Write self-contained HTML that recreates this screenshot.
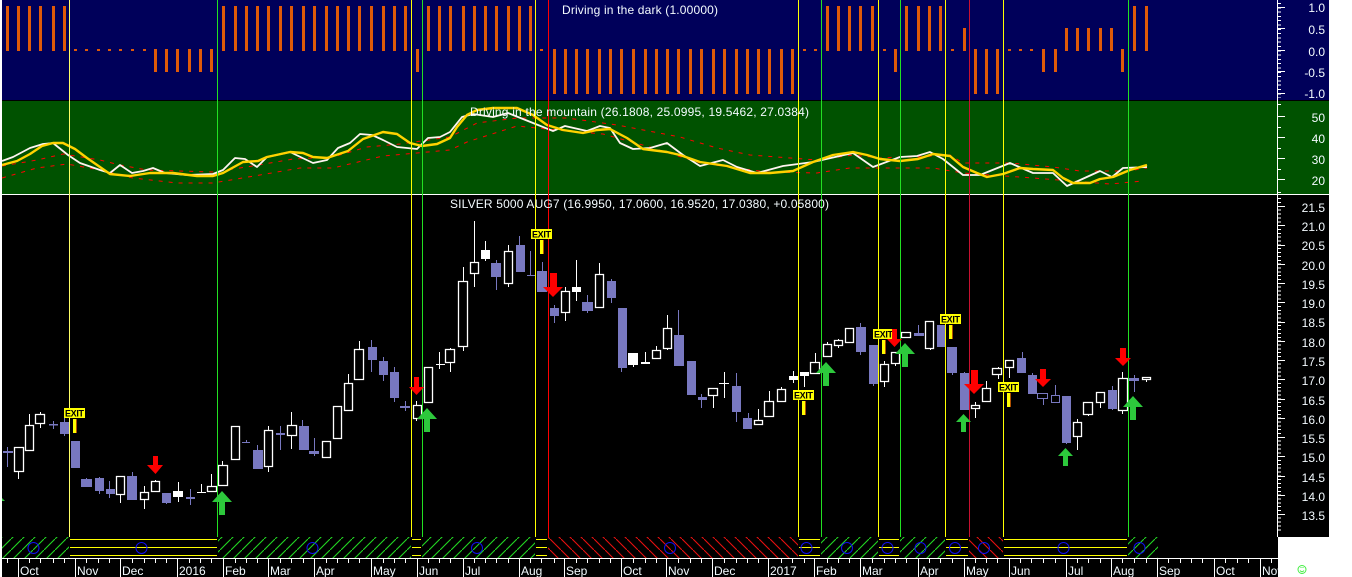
<!DOCTYPE html>
<html><head><meta charset="utf-8"><title>Silver chart</title>
<style>html,body{margin:0;padding:0;background:#fff;overflow:hidden}svg{display:block}text{font-family:"Liberation Sans",Arial,sans-serif}</style></head>
<body>
<svg width="1352" height="577" viewBox="0 0 1352 577" xmlns="http://www.w3.org/2000/svg">
<defs>
<pattern id="hg" patternUnits="userSpaceOnUse" width="11" height="11"><path d="M0 11L11 0" stroke="#22d822" stroke-width="1.100" fill="none"/></pattern>
<pattern id="hr" patternUnits="userSpaceOnUse" width="11" height="11"><path d="M0 0L11 11" stroke="#e81010" stroke-width="1.100" fill="none"/></pattern>
</defs>
<rect width="1352" height="577" fill="#fff"/>
<rect x="2" y="0" width="1327" height="100" fill="#00005a"/>
<rect x="2" y="100" width="1327" height="1" fill="#000"/>
<rect x="2" y="101" width="1327" height="93" fill="#005200"/>
<rect x="2" y="194" width="1327" height="1" fill="#fff"/>
<rect x="2" y="195" width="1327" height="342" fill="#000"/>
<rect x="2" y="537" width="1276" height="40" fill="#000"/>

<!-- dark indicator -->
<path fill="none" stroke="#e05a08" stroke-width="3" shape-rendering="crispEdges" d="M7.5 6V51M18.5 6V51M29.5 6V51M40.5 6V51M53.5 6V51M64.5 6V51M223.5 6V51M235.5 6V51M246.5 6V51M257.5 6V51M268.5 6V51M280.5 6V51M291.5 6V51M303.5 6V51M314.5 6V51M326.5 6V51M337.5 6V51M348.5 6V51M359.5 6V51M371.5 6V51M383.5 6V51M394.5 6V51M405.5 6V51M428.5 6V51M439.5 6V51M450.5 6V51M463.5 6V51M474.5 6V51M485.5 6V51M496.5 6V51M508.5 6V51M519.5 6V51M530.5 6V51M827.5 6V51M838.5 6V51M849.5 6V51M860.5 6V51M872.5 6V51M906.5 6V51M918.5 6V51M929.5 6V51M940.5 6V51M1134.5 6V51M1146.5 6V51
M155.5 49V72M166.5 49V72M177.5 49V72M189.5 49V72M200.5 49V72M211.5 49V72M417.5 49V72M895.5 49V72M1043.5 49V72M1055.5 49V72M1122.5 49V72
M964.5 28V51M1066.5 28V51M1077.5 28V51M1088.5 28V51M1100.5 28V51M1111.5 28V51
M554.5 49V94M565.5 49V94M576.5 49V94M587.5 49V94M599.5 49V94M610.5 49V94M621.5 49V94M633.5 49V94M645.5 49V94M656.5 49V94M667.5 49V94M678.5 49V94M690.5 49V94M701.5 49V94M713.5 49V94M724.5 49V94M736.5 49V94M747.5 49V94M758.5 49V94M769.5 49V94M781.5 49V94M792.5 49V94M975.5 49V94M986.5 49V94M997.5 49V94
M75.5 49V51M86.5 49V51M98.5 49V51M109.5 49V51M120.5 49V51M132.5 49V51M144.5 49V51M541.5 49V51M804.5 49V51M815.5 49V51M884.5 49V51M952.5 49V51M1009.5 49V51M1020.5 49V51M1031.5 49V51"/>

<!-- mountain indicator -->
<g fill="none" stroke-linejoin="round">
<path stroke="#ff0000" stroke-dasharray="4 6" d="M2 166L37 160L63 154L100 160L120 165L147 170L213 172L253 166L293 159L333 157L367 147L400 144L450 137L477 123L517 118L567 118L617 125L680 137L717 148L750 155L817 160L853 155L880 158L900 157L917 157L950 155L963 163L1010 163L1053 167L1080 171L1127 171L1147 168"/>
<path stroke="#ff0000" stroke-dasharray="4 6" d="M2 178L37 168L67 164L100 170L133 178L177 183L213 183L260 175L300 168L333 168L383 156L450 150L467 142L517 126L557 130L603 134L650 147L700 163L767 172L817 173L850 168L900 168L933 168L963 173L1033 178L1110 184L1143 181"/>
<path stroke="#fff4f0" stroke-width="1.800" d="M2 161L13 157L30 148L43 144L53 143L68 155L80 163L100 170L110 173L120 165L132 173L143 171L153 168L165 173L187 175L213 174L223 170L235 158L245 159L257 167L267 157L290 152L313 163L327 160L338 148L350 143L360 134L372 135L383 140L397 147L417 149L428 138L440 137L450 132L462 117L473 114L493 117L508 113L533 123L553 131L565 126L587 131L600 126L610 128L620 143L633 149L650 148L667 143L683 155L700 166L723 160L737 167L757 173L783 166L813 162L853 153L873 167L900 157L917 156L930 152L943 159L963 175L980 175L1010 163L1033 173L1053 173L1067 186L1100 171L1112 177L1123 168L1147 167"/>
<path stroke="#ffd200" stroke-width="2.400" d="M2 165L17 161L30 154L42 146L53 143L63 143L75 149L87 158L110 174L130 176L150 173L173 173L197 176L213 176L223 173L243 162L258 161L267 157L290 152L303 153L313 157L327 158L348 151L363 139L383 132L397 134L410 143L422 146L437 144L450 138L457 127L467 115L477 110L493 108L517 108L533 115L547 125L563 130L583 133L597 130L610 129L627 138L643 149L667 152L680 155L700 162L727 166L750 173L770 173L793 171L813 162L833 155L853 152L867 155L880 159L900 161L918 159L933 154L950 156L963 167L977 173L987 177L1003 174L1020 168L1033 169L1053 170L1063 178L1073 183L1090 183L1100 179L1113 177L1130 170L1147 165"/>
</g>

<!-- candles -->
<g shape-rendering="crispEdges">
<path fill="none" stroke="#fff" d="M18.5 471V479M29.5 414V425M40.5 412V428M120.5 494V503M144.5 486V509M155.5 480V482M201.5 484V492M197 492.5H206M211.5 474V487M222.5 461V466M268.5 426V472M291.5 412V449M348.5 374V384M359.5 341V350M416.5 401V421M439.5 352V369M436 364.5H445M450.5 348V372M463.5 267V351M474.5 221V287M508.5 245V287M565.5 287V321M599.5 263V275M656.5 346V351M667.5 315V350M713.5 395V408M724.5 372V398M719 383.5H729M758.5 409V421M769.5 391V402M781.5 387V390M815.5 353V363M827.5 342V345M838.5 339V348M849.5 328V343M884.5 361V387M895.5 352V366M930.5 321V350M975.5 402V418M986.5 381V389M998.5 367V379M1009.5 367V378M1077.5 419V450M1088.5 402V416M1100.5 402V408M1122.5 372V414M1146.5 377V382M178.5 482V502M485.5 241V261M576.5 260V301M633.5 365V367M645.5 352V363M793.5 371V383M804.5 376V387"/>
</g>
<path fill="#000" stroke="#fff" stroke-width="1.300" d="M14.5 447.5H23.5V471.5H14.5ZM25.5 425.5H33.5V450.5H25.5ZM35.5 414.5H44.5V423.5H35.5ZM116.5 476.5H124.5V494.5H116.5ZM140.5 492.5H148.5V499.5H140.5ZM151.5 481.5H159.5V491.5H151.5ZM207.5 486.5H216.5V491.5H207.5ZM218.5 465.5H227.5V485.5H218.5ZM231.5 426.5H239.5V459.5H231.5ZM264.5 430.5H272.5V466.5H264.5ZM287.5 425.5H296.5V435.5H287.5ZM322.5 441.5H330.5V457.5H322.5ZM333.5 406.5H341.5V438.5H333.5ZM344.5 383.5H352.5V410.5H344.5ZM354.5 349.5H363.5V379.5H354.5ZM413.5 405.5H421.5V418.5H413.5ZM424.5 367.5H432.5V402.5H424.5ZM445.5 349.5H454.5V362.5H445.5ZM458.5 281.5H467.5V346.5H458.5ZM470.5 262.5H478.5V273.5H470.5ZM504.5 251.5H512.5V283.5H504.5ZM561.5 291.5H569.5V312.5H561.5ZM595.5 274.5H603.5V307.5H595.5ZM652.5 350.5H660.5V358.5H652.5ZM663.5 328.5H671.5V348.5H663.5ZM708.5 388.5H717.5V395.5H708.5ZM754.5 420.5H762.5V424.5H754.5ZM764.5 401.5H773.5V416.5H764.5ZM777.5 389.5H785.5V401.5H777.5ZM810.5 362.5H819.5V373.5H810.5ZM823.5 344.5H831.5V356.5H823.5ZM834.5 340.5H842.5V345.5H834.5ZM845.5 328.5H853.5V342.5H845.5ZM880.5 364.5H888.5V381.5H880.5ZM891.5 352.5H899.5V363.5H891.5ZM901.5 332.5H910.5V337.5H901.5ZM925.5 321.5H933.5V348.5H925.5ZM971.5 405.5H979.5V408.5H971.5ZM982.5 388.5H990.5V401.5H982.5ZM992.5 368.5H1001.5V374.5H992.5ZM1005.5 360.5H1013.5V367.5H1005.5ZM1073.5 422.5H1081.5V436.5H1073.5ZM1083.5 402.5H1092.5V414.5H1083.5ZM1096.5 392.5H1104.5V402.5H1096.5ZM1118.5 378.5H1127.5V410.5H1118.5ZM1142.5 377.5H1150.5V379.5H1142.5Z"/>
<g shape-rendering="crispEdges">
<path fill="#fff" d="M173 491h10v6h-10zM481 250h9v9h-9zM572 287h9v5h-9zM628 353h10v12h-10zM641 362h9v2h-9zM789 376h9v4h-9zM800 372h9v4h-9z"/>
<path fill="none" stroke="#7878c0" d="M7.5 447V467M53.5 421V429M64.5 415V436M86.5 478V480M99.5 477V494M109.5 481V498M132.5 472V477M166.5 503V504M190.5 489V505M246.5 440V442M257.5 445V451M280.5 426V450M302.5 420V427M314.5 438V456M371.5 340V372M383.5 357V381M394.5 367V402M405.5 401V411M496.5 260V290M519.5 236V246M530.5 251V276M542.5 262V272M554.5 305V323M587.5 295V313M611.5 279V303M621.5 368V372M678.5 310V336M701.5 394V408M736.5 373V422M748.5 413V419M860.5 323V355M873.5 384V386M918.5 325V334M952.5 373V375M964.5 372V374M1022.5 352V359M1032.5 373V376M1043.5 398V405M1055.5 385V396M1066.5 443V444M1112.5 386V410M1134.5 375V392"/>
<path fill="#7878c0" d="M3 451h10v2H3zM49 424h9v1.500h-9zM60 422h9v12h-9zM71 441h9v27h-9zM81 479h11v8H81zM95 478h9v13h-9zM106 489h9v5h-9zM127 476h10v24h-10zM162 493h9v10h-9zM186 497h9v2h-9zM242 442h8v1h-8zM253 450h10v19h-10zM276 433h9v2h-9zM299 426h10v24h-10zM309 451h10v3h-10zM368 347h9v13h-9zM379 361h9v14h-9zM390 372h9v26h-9zM400 406h10v2h-10zM491 263h10v14h-10zM516 245h9v27h-9zM527 275h9v1h-9zM537 271h10v21h-10zM550 308h9v8h-9zM582 302h11v9h-11zM607 281h9v17h-9zM618 308h9v60h-9zM674 335h10v31h-10zM687 361h9v34h-9zM698 397h9v3h-9zM732 386h9v26h-9zM743 418h9v11h-9zM856 327h10v25h-10zM869 345h9v39h-9zM914 333h10v3h-10zM937 325h9v22h-9zM947 347h10v26h-10zM960 373h9v37h-9zM1017 358h9v15h-9zM1028 375h9v19h-9zM1062 396h9v47h-9zM1108 390h9v19h-9zM1128 378h11v3h-11z"/>
<path fill="none" stroke="#7878c0" d="M1037.500 393.500H1047.500V398.500H1037.500ZM1051.500 395.500H1059.500V402.500H1051.500Z"/>

<!-- vertical signal lines -->
<path fill="none" stroke="#ffff66" d="M69.500 0V537"/>
<path fill="none" stroke="#ffff00" d="M411.500 0V537M535.500 0V537M798.500 0V537M878.500 0V537M945.500 0V537M1003.500 0V537"/>
<path fill="none" stroke="#22e022" d="M217.500 0V537M422.500 0V537M821.500 0V537M900.500 0V537M1128.500 0V537"/>
<path fill="none" stroke="#ff0000" d="M548.500 0V537"/>
<path fill="none" stroke="#c81030" d="M969.500 0V537"/>

<!-- hatch band -->
<g shape-rendering="auto">
<rect x="2" y="537" width="67" height="21" fill="url(#hg)"/>
<rect x="218" y="537" width="193" height="21" fill="url(#hg)"/>
<rect x="422" y="537" width="113" height="21" fill="url(#hg)"/>
<rect x="548" y="537" width="250" height="21" fill="url(#hr)"/>
<rect x="821" y="537" width="57" height="21" fill="url(#hg)"/>
<rect x="900" y="537" width="45" height="21" fill="url(#hg)"/>
<rect x="969" y="537" width="34" height="21" fill="url(#hr)"/>
<rect x="1128" y="537" width="30" height="21" fill="url(#hg)"/>
</g>
<path fill="none" stroke="#ffff00" d="M70 539.500H217M70 547.500H217M70 555.500H217M412 539.500H421M412 547.500H421M412 555.500H421M536 539.500H547M536 547.500H547M536 555.500H547M799 539.500H820M799 547.500H820M799 555.500H820M879 539.500H899M879 547.500H899M879 555.500H899M946 539.500H968M946 547.500H968M946 555.500H968M1004 539.500H1127M1004 547.500H1127M1004 555.500H1127"/>
</g>
<g fill="none" stroke="#1010f0" stroke-width="1">
<circle cx="33.500" cy="548" r="5.500"/><circle cx="141.500" cy="548" r="5.500"/><circle cx="312.500" cy="548" r="5.500"/><circle cx="477" cy="548" r="5.500"/><circle cx="670" cy="548" r="5.500"/><circle cx="806.500" cy="548" r="5.500"/><circle cx="847" cy="548" r="5.500"/><circle cx="887.500" cy="548" r="5.500"/><circle cx="920.500" cy="548" r="5.500"/><circle cx="955" cy="548" r="5.500"/><circle cx="984" cy="548" r="5.500"/><circle cx="1063.500" cy="548" r="5.500"/><circle cx="1139.500" cy="548" r="5.500"/>
</g>

<!-- exit markers -->
<g shape-rendering="crispEdges">
<rect x="64" y="408" width="21" height="10" fill="#ffff00"/><rect x="73" y="419" width="3" height="14" fill="#ffff00"/><rect x="76" y="419" width="1" height="14" fill="#b05000"/>
<rect x="531" y="229" width="21" height="10" fill="#ffff00"/><rect x="540" y="240" width="3" height="14" fill="#ffff00"/><rect x="543" y="240" width="1" height="14" fill="#b05000"/>
<rect x="793" y="390" width="21" height="10" fill="#ffff00"/><rect x="802" y="401" width="3" height="14" fill="#ffff00"/><rect x="805" y="401" width="1" height="14" fill="#b05000"/>
<rect x="873" y="329" width="21" height="10" fill="#ffff00"/><rect x="882" y="340" width="3" height="14" fill="#ffff00"/><rect x="885" y="340" width="1" height="14" fill="#b05000"/>
<rect x="940" y="314" width="21" height="10" fill="#ffff00"/><rect x="949" y="325" width="3" height="14" fill="#ffff00"/><rect x="952" y="325" width="1" height="14" fill="#b05000"/>
<rect x="998" y="382" width="21" height="10" fill="#ffff00"/><rect x="1007" y="393" width="3" height="14" fill="#ffff00"/><rect x="1010" y="393" width="1" height="14" fill="#b05000"/>
</g>
<g font-size="9" font-weight="bold" fill="#000">
<text x="65" y="416.500" textLength="19" lengthAdjust="spacing">EXIT</text>
<text x="532" y="237.500" textLength="19" lengthAdjust="spacing">EXIT</text>
<text x="794" y="398.500" textLength="19" lengthAdjust="spacing">EXIT</text>
<text x="874" y="337.500" textLength="19" lengthAdjust="spacing">EXIT</text>
<text x="941" y="322.500" textLength="19" lengthAdjust="spacing">EXIT</text>
<text x="999" y="390.500" textLength="19" lengthAdjust="spacing">EXIT</text>
</g>

<!-- arrows -->
<g fill="#ff0000">
<polygon points="153,456 158,456 158,465 163,465 155.500,474 147,465 153,465"/>
<polygon points="550,273 557,273 557,287 563,287 553,297 543,287 550,287"/>
<polygon points="414,377 419,377 419,387 424,387 416.500,395 409,387 414,387"/>
<polygon points="892,329 897,329 897,339 902,339 894.500,347 887,339 892,339"/>
<polygon points="971,370 978,370 978,384 984,384 974,394 964,384 971,384"/>
<polygon points="1040,369 1046,369 1046,379 1051,379 1043,387 1035,379 1040,379"/>
<polygon points="1120,348 1126,348 1126,358 1131,358 1123,366 1115,358 1120,358"/>
</g>
<g fill="#2dc83c">
<polygon points="0,501 0,497 1,497 5,501"/>
<polygon points="222,491 232,502 225,502 225,515 219,515 219,502 212,502"/>
<polygon points="427,408 437,419 430,419 430,432 424,432 424,419 417,419"/>
<polygon points="826,362 836,373 829,373 829,386 823,386 823,373 816,373"/>
<polygon points="905,343 915,354 908,354 908,367 902,367 902,354 895,354"/>
<polygon points="963.500,414 971,422 966,422 966,432 961,432 961,422 956,422"/>
<polygon points="1065.500,448 1073,456 1068,456 1068,466 1063,466 1063,456 1058,456"/>
<polygon points="1133,396 1143,407 1136,407 1136,420 1130,420 1130,407 1123,407"/>
</g>

<!-- y axis -->
<g shape-rendering="crispEdges" fill="none" stroke="#fff">
<path d="M1277.500 0V537"/>
<path d="M1277 7.500H1285M1277 28.500H1285M1277 50.500H1285M1277 71.500H1285M1277 93.500H1285M1277 116.500H1285M1277 137.500H1285M1277 158.500H1285M1277 179.500H1285M1277 206.500H1285M1277 225.500H1285M1277 245.500H1285M1277 264.500H1285M1277 283.500H1285M1277 302.500H1285M1277 322.500H1285M1277 341.500H1285M1277 360.500H1285M1277 379.500H1285M1277 399.500H1285M1277 418.500H1285M1277 437.500H1285M1277 456.500H1285M1277 476.500H1285M1277 495.500H1285M1277 514.500H1285"/>
<path d="M1277 104.500H1281M1277 127.500H1281M1277 148.500H1281M1277 169.500H1281M1277 192.500H1281M1277 198.500H1281"/>
<line x1="1279" y1="3" x2="1279" y2="98" stroke-width="4" stroke-dasharray="1 3.300"/>
<line x1="1279" y1="202" x2="1279" y2="533" stroke-width="4" stroke-dasharray="1 2.850"/>
</g>
<g font-size="12" fill="#f4fbff" text-anchor="end">
<text x="1325" y="12">1.0</text><text x="1325" y="34">0.5</text><text x="1325" y="56">0.0</text><text x="1325" y="77">-0.5</text><text x="1325" y="98">-1.0</text>
<text x="1325" y="122">50</text><text x="1325" y="143">40</text><text x="1325" y="164">30</text><text x="1325" y="185">20</text>
<text x="1325" y="212">21.5</text><text x="1325" y="231">21.0</text><text x="1325" y="250">20.5</text><text x="1325" y="270">20.0</text><text x="1325" y="289">19.5</text><text x="1325" y="308">19.0</text><text x="1325" y="327">18.5</text><text x="1325" y="347">18.0</text><text x="1325" y="366">17.5</text><text x="1325" y="385">17.0</text><text x="1325" y="405">16.5</text><text x="1325" y="424">16.0</text><text x="1325" y="443">15.5</text><text x="1325" y="462">15.0</text><text x="1325" y="482">14.5</text><text x="1325" y="501">14.0</text><text x="1325" y="520">13.5</text>
</g>

<!-- titles -->
<g font-size="12" fill="#f4fbff">
<text x="562" y="14" textLength="156" lengthAdjust="spacing">Driving in the dark (1.00000)</text>
<text x="470" y="116" textLength="339" lengthAdjust="spacing">Driving in the mountain (26.1808, 25.0995, 19.5462, 27.0384)</text>
<text x="450" y="208" textLength="379" lengthAdjust="spacing">SILVER 5000 AUG7 (16.9950, 17.0600, 16.9520, 17.0380, +0.05800)</text>
</g>

<!-- time axis -->
<g shape-rendering="crispEdges" fill="none" stroke="#fff">
<path d="M2 558.500H1278"/>
<path d="M18.500 558V577M75.500 558V577M120.500 558V577M177.500 558V577M223.500 558V577M268.500 558V577M314.500 558V577M371.500 558V577M417.500 558V577M463.500 558V577M519.500 558V577M564.500 558V577M621.500 558V577M666.500 558V577M712.500 558V577M768.500 558V577M814.500 558V577M860.500 558V577M918.500 558V577M964.500 558V577M1009.500 558V577M1066.500 558V577M1111.500 558V577M1157.500 558V577M1214.500 558V577M1260.500 558V577"/>
<path d="M7.500 558V563M29.500 558V563M40.500 558V563M53.500 558V563M64.500 558V563M86.500 558V563M98.500 558V563M109.500 558V563M132.500 558V563M144.500 558V563M155.500 558V563M166.500 558V563M189.500 558V563M200.500 558V563M211.500 558V563M235.500 558V563M246.500 558V563M257.500 558V563M280.500 558V563M291.500 558V563M303.500 558V563M326.500 558V563M337.500 558V563M348.500 558V563M359.500 558V563M383.500 558V563M394.500 558V563M405.500 558V563M428.500 558V563M439.500 558V563M450.500 558V563M474.500 558V563M485.500 558V563M496.500 558V563M508.500 558V563M530.500 558V563M541.500 558V563M554.500 558V563M576.500 558V563M587.500 558V563M599.500 558V563M610.500 558V563M633.500 558V563M645.500 558V563M656.500 558V563M678.500 558V563M690.500 558V563M701.500 558V563M724.500 558V563M736.500 558V563M747.500 558V563M758.500 558V563M781.500 558V563M792.500 558V563M804.500 558V563M827.500 558V563M838.500 558V563M849.500 558V563M872.500 558V563M884.500 558V563M895.500 558V563M906.500 558V563M929.500 558V563M940.500 558V563M952.500 558V563M975.500 558V563M986.500 558V563M997.500 558V563M1020.500 558V563M1031.500 558V563M1043.500 558V563M1055.500 558V563M1077.500 558V563M1088.500 558V563M1100.500 558V563M1122.500 558V563M1134.500 558V563M1146.500 558V563M1168.500 558V563M1180.500 558V563M1191.500 558V563M1202.500 558V563M1225.500 558V563M1237.500 558V563M1248.500 558V563M1271.500 558V563"/>
</g>
<g font-size="12" fill="#f4fbff">
<text x="20" y="575">Oct</text><text x="77" y="575">Nov</text><text x="122" y="575">Dec</text><text x="179" y="575">2016</text><text x="225" y="575">Feb</text><text x="270" y="575">Mar</text><text x="316" y="575">Apr</text><text x="373" y="575">May</text><text x="419" y="575">Jun</text><text x="465" y="575">Jul</text><text x="521" y="575">Aug</text><text x="566" y="575">Sep</text><text x="623" y="575">Oct</text><text x="668" y="575">Nov</text><text x="714" y="575">Dec</text><text x="770" y="575">2017</text><text x="816" y="575">Feb</text><text x="862" y="575">Mar</text><text x="920" y="575">Apr</text><text x="966" y="575">May</text><text x="1011" y="575">Jun</text><text x="1068" y="575">Jul</text><text x="1113" y="575">Aug</text><text x="1159" y="575">Sep</text><text x="1216" y="575">Oct</text><text x="1262" y="575">Nov</text>
</g>
<rect x="1278" y="537" width="74" height="40" fill="#fff"/>
<rect x="0" y="0" width="2" height="577" fill="#fff"/>
<!-- smiley -->
<g fill="none" stroke="#44ee44" stroke-width="1">
<circle cx="1302" cy="569.500" r="4"/>
<path d="M1300 570.500Q1302 573 1304 570.500"/>
<path d="M1300.500 567.500h1M1302.500 567.500h1"/>
</g>
</svg>
</body></html>
